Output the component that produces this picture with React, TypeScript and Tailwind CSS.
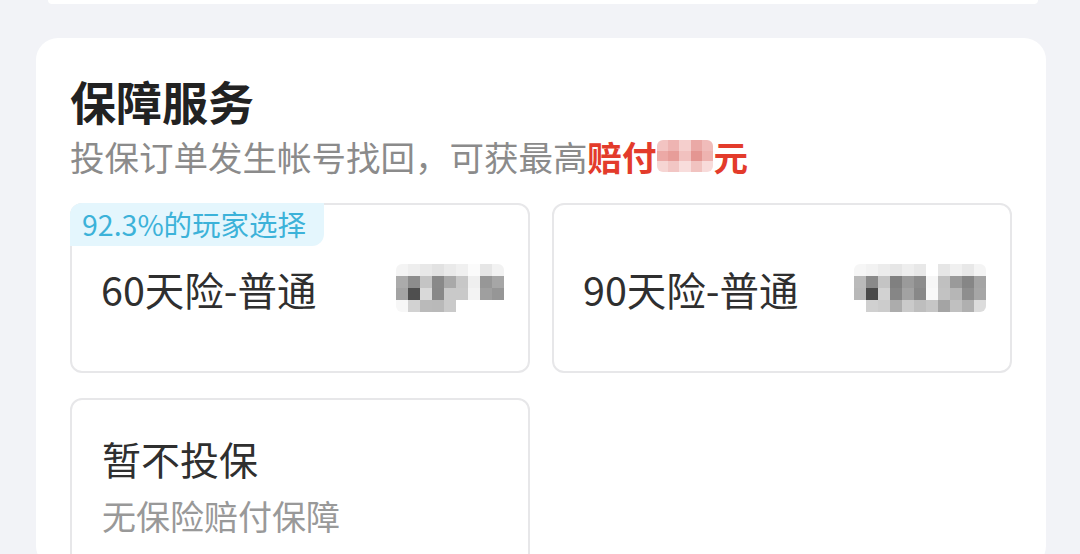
import React from 'react';

const font = { fontFamily: '"Noto Sans CJK SC", "Noto Sans", sans-serif' };

// pixelated blur blocks standing in for hidden prices
const priceA = [
  ['#f4f4f4', '#eeeeee', '#e8e8e8', '#e2e2e2', '#eaeaea', '#f0f0f0', '#fbfbfb', '#e6e6e6', '#f2f2f2'],
  ['#ababab', '#8d8d8d', '#c4c4c4', '#898989', '#a9a9a9', '#c7c7c7', '#efefef', '#979797', '#a6a6a6'],
  ['#a3a3a3', '#4f4f4f', '#d9d9d9', '#888888', '#c9c9c9', '#c9c9c9', '#f3f3f3', '#9f9f9f', '#969696'],
  ['#f7f7f7', '#d2d2d2', '#bababa', '#b9b9b9', '#cacaca', '#ffffff', '#ffffff', '#ffffff', '#ffffff'],
];

const priceB = [
  ['#f6f6f6', '#f2f2f2', '#ececec', '#e6e6e6', '#eeeeee', '#e8e8e8', '#ffffff', '#e6e6e6', '#f0f0f0', '#e8e8e8', '#f4f4f4'],
  ['#bababa', '#8a8a8a', '#c4c4c4', '#808080', '#9a9a9a', '#8c8c8c', '#f6f6f6', '#c0c0c0', '#9a9a9a', '#868686', '#a4a4a4'],
  ['#b8b8b8', '#4a4a4a', '#d2d2d2', '#868686', '#a2a2a2', '#888888', '#f8f8f8', '#c2c2c2', '#b6b6b6', '#8e8e8e', '#a6a6a6'],
  ['#ffffff', '#d0d0d0', '#cccccc', '#acacac', '#cacaca', '#bebebe', '#c6c6c6', '#a4a4a4', '#c0c0c0', '#b0b0b0', '#dcdcdc'],
];

const redBlur = [
  ['#f3c4c2', '#eeb4b2', '#f5cfcd', '#eaa9a6', '#f0bcba'],
  ['#eca9a6', '#e79d99', '#f1c1bf', '#e49692', '#eeb3b0'],
  ['#f6d5d3', '#f2c6c4', '#f8dddc', '#f1c3c0', '#f8dbda'],
];

function Mosaic({ rows, w, h }: { rows: string[][]; w: number; h: number }) {
  return (
    <div className="flex flex-col rounded-[6px] overflow-hidden">
      {rows.map((r, i) => (
        <div key={i} className="flex">
          {r.map((c, j) => (
            <div key={j} style={{ width: w, height: h, backgroundColor: c }} />
          ))}
        </div>
      ))}
    </div>
  );
}

function PlanCard({ name, price, badge }: { name: string; price: string[][]; badge?: string }) {
  return (
    <div className="relative h-[170px] rounded-[12px] border-2 border-[#e7e7e9] bg-white flex items-center justify-between pl-[29px] pr-[24px]">
      {badge && (
        <div className="absolute -left-[2px] -top-[2px] h-[43px] pl-[12px] pr-[18px] flex items-center rounded-tl-[12px] rounded-br-[12px] bg-[#e4f6fd] text-[28.5px] leading-none text-[#3cb2d9]">
          {badge}
        </div>
      )}
      <span className="text-[39.5px] leading-none text-[#2f2f2f] mt-[2px]">{name}</span>
      <Mosaic rows={price} w={12} h={12} />
    </div>
  );
}

export default function App() {
  return (
    <div style={font} className="w-[1080px] h-[554px] overflow-hidden bg-[#f2f3f7] flex flex-col">
      <div className="ml-[48px] mr-[42px] h-[4px] shrink-0 bg-white rounded-b-[16px]" />
      <div className="mt-[34px] ml-[36px] mr-[34px] bg-white rounded-[22px] pt-[39px] pl-[34px] pr-[34px] flex-1">
        <h2 className="text-[46px] leading-[46px] font-bold text-[#222222]">保障服务</h2>
        <div className="mt-[16px] flex items-center text-[34.5px] leading-[34px] text-[#8b8b8b]">
          <span>投保订单发生帐号找回，可获最高</span>
          <span className="font-bold text-[#e33b2b]">赔付</span>
          <Mosaic rows={redBlur} w={11.4} h={10.4} />
          <span className="font-bold text-[#e33b2b]">元</span>
        </div>
        <div className="mt-[30px] grid grid-cols-2 gap-x-[22px] gap-y-[25px]">
          <PlanCard name="60天险-普通" price={priceA} badge="92.3%的玩家选择" />
          <PlanCard name="90天险-普通" price={priceB} />
          <div className="h-[170px] rounded-[12px] border-2 border-[#e7e7e9] bg-white pl-[30px] pt-[39px]">
            <div className="text-[39px] leading-[39px] text-[#2f2f2f]">暂不投保</div>
            <div className="mt-[21px] text-[34px] leading-[34px] text-[#999999]">无保险赔付保障</div>
          </div>
        </div>
      </div>
    </div>
  );
}
